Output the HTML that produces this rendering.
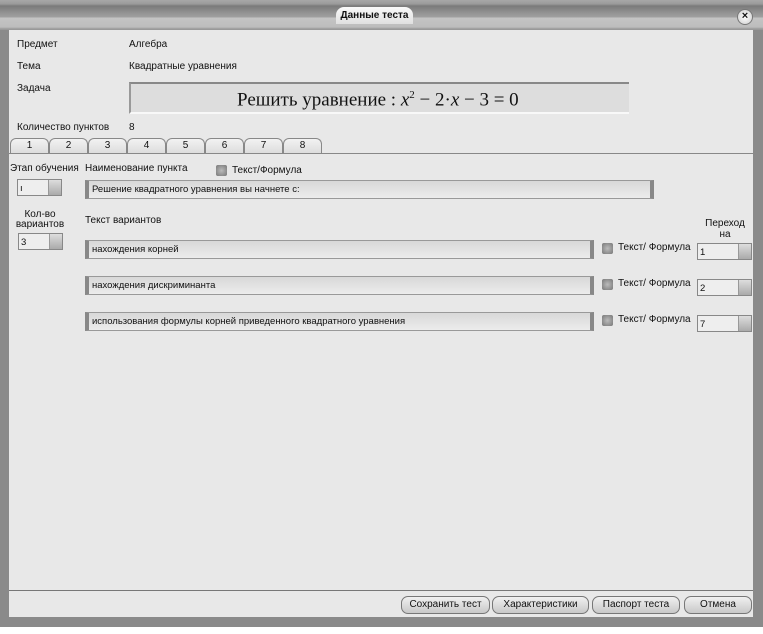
<!DOCTYPE html>
<html><head><meta charset="utf-8"><style>
*{margin:0;padding:0;box-sizing:border-box}
body{width:763px;height:634px;overflow:hidden;background:#fff;font-family:"Liberation Sans",sans-serif;font-size:10px;color:#111;position:relative}
.a{position:absolute}
.frame{left:0;top:0;width:763px;height:627px;background:#8a8a8a}
.title{left:0;top:0;width:763px;height:30px;background:linear-gradient(#a8a8a8 0,#9a9a9a 4px,#7a7a7a 6px,#909090 12px,#a0a0a0 17px,#c4c4c4 18px,#bdbdbd 27px,#999 29px)}
.content{left:9px;top:30px;width:744px;height:587px;background:#e8e8e8}
.tab{left:336px;top:7px;width:77px;height:17px;background:linear-gradient(#fafafa,#e0e0e0);border-radius:8px 8px 0 0;font-weight:bold;font-size:10px;text-align:center;line-height:17px}
.close{left:737px;top:9px;width:16px;height:16px;border-radius:50%;background:radial-gradient(#fff,#ccc);border:1px solid #777;font-weight:bold;font-size:11px;text-align:center;line-height:13px}
.inp{background:linear-gradient(#d8d8d8,#ececec);border:1px solid #999;border-left:4px solid #888;border-right:4px solid #888;height:19px;padding-left:3px;line-height:18px;font-size:9.5px}
.sel{border:1px solid #888;background:#eee;height:17px;font-size:9.5px;padding-left:2px;line-height:17px}
.sel::after{content:"";position:absolute;right:0;top:0;width:12px;height:15px;background:linear-gradient(#ddd,#aaa);border-left:1px solid #999}
.chk{width:11px;height:11px;background:radial-gradient(#bbb,#777);border-radius:2px}
.t{position:absolute;width:39px;height:15px;top:138px;border:1px solid #888;border-bottom:none;border-radius:6px 6px 0 0;background:linear-gradient(#f2f2f2,#ddd);text-align:center;line-height:14px;font-size:10px}
.btn{top:596px;height:18px;border:1px solid #777;border-radius:7px;background:linear-gradient(#f0f0f0,#c8c8c8);text-align:center;line-height:16px;font-size:10px}
</style></head><body>
<div class="a frame"></div>
<div class="a title"></div>
<div class="a tab">Данные теста</div>
<div class="a close">×</div>
<div class="a content"></div>
<div class="a" style="left:17px;top:39px">Предмет</div>
<div class="a" style="left:129px;top:39px">Алгебра</div>
<div class="a" style="left:17px;top:61px">Тема</div>
<div class="a" style="left:129px;top:61px">Квадратные уравнения</div>
<div class="a" style="left:17px;top:83px">Задача</div>
<div class="a" style="left:129px;top:82px;width:500px;height:32px;background:#ddd;border-top:2px solid #888;border-left:2px solid #999;border-bottom:2px solid #f8f8f8;font-family:'Liberation Serif',serif;font-size:19px;line-height:22px;padding-left:106px">Решить уравнение : <i>x</i><sup style="font-size:11px">2</sup> − 2·<i>x</i> − 3 = 0</div>
<div class="a" style="left:17px;top:122px">Количество пунктов</div>
<div class="a" style="left:129px;top:122px">8</div>
<div class="a" style="left:9px;top:153px;width:744px;height:1px;background:#888"></div>
<div class="t" style="left:10px">1</div><div class="t" style="left:49px">2</div><div class="t" style="left:88px">3</div><div class="t" style="left:127px">4</div><div class="t" style="left:166px">5</div><div class="t" style="left:205px">6</div><div class="t" style="left:244px">7</div><div class="t" style="left:283px">8</div>
<div class="a" style="left:10px;top:163px">Этап обучения</div>
<div class="a" style="left:85px;top:163px">Наименование пункта</div>
<div class="a chk" style="left:216px;top:165px"></div>
<div class="a" style="left:232px;top:165px">Текст/Формула</div>
<div class="a sel" style="left:17px;top:179px;width:45px">ı</div>
<div class="a inp" style="left:85px;top:180px;width:569px">Решение квадратного уравнения вы начнете с:</div>
<div class="a" style="left:14px;top:210px;width:52px;text-align:center;line-height:10px">Кол-во<br>вариантов</div>
<div class="a sel" style="left:18px;top:233px;width:45px">3</div>
<div class="a" style="left:85px;top:215px">Текст вариантов</div>
<div class="a" style="left:700px;top:218px;width:50px;text-align:center;line-height:11px">Переход<br>на</div>
<div class="a inp" style="left:85px;top:240px;width:509px">нахождения корней</div>
<div class="a inp" style="left:85px;top:276px;width:509px">нахождения дискриминанта</div>
<div class="a inp" style="left:85px;top:312px;width:509px">использования формулы корней приведенного квадратного уравнения</div>
<div class="a chk" style="left:602px;top:243px"></div><div class="a" style="left:618px;top:242px">Текст/ Формула</div>
<div class="a chk" style="left:602px;top:279px"></div><div class="a" style="left:618px;top:278px">Текст/ Формула</div>
<div class="a chk" style="left:602px;top:315px"></div><div class="a" style="left:618px;top:314px">Текст/ Формула</div>
<div class="a sel" style="left:697px;top:243px;width:55px">1</div>
<div class="a sel" style="left:697px;top:279px;width:55px">2</div>
<div class="a sel" style="left:697px;top:315px;width:55px">7</div>
<div class="a" style="left:9px;top:590px;width:744px;height:1px;background:#777"></div>
<div class="a btn" style="left:401px;width:89px">Сохранить тест</div>
<div class="a btn" style="left:492px;width:97px">Характеристики</div>
<div class="a btn" style="left:592px;width:88px">Паспорт теста</div>
<div class="a btn" style="left:684px;width:68px">Отмена</div>
<div class="a" style="left:14px;top:628px;width:749px;height:6px;background:#fff"></div>
</body></html>
